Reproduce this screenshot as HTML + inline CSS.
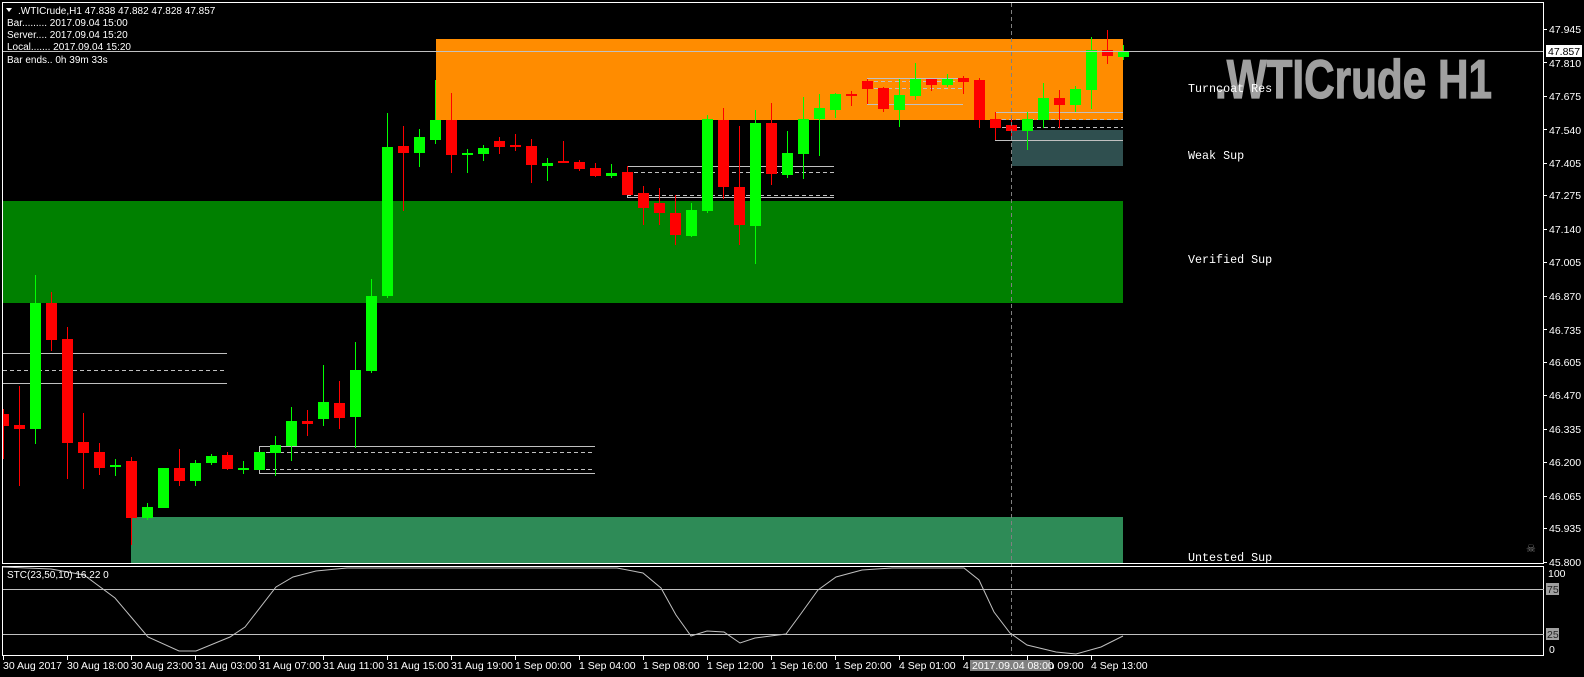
<!DOCTYPE html>
<html><head><meta charset="utf-8"><style>
html,body{margin:0;padding:0;background:#000;width:1584px;height:677px;overflow:hidden}
svg{display:block}
text{font-family:"Liberation Sans",sans-serif}
.ax{font-size:10.5px;fill:#fff}
.mono{font-family:"Liberation Mono",monospace;font-size:11.7px;fill:#fff}
.tl{font-size:10px;fill:#fff}
</style></head><body>
<svg id="s" width="1584" height="677" xmlns="http://www.w3.org/2000/svg">
<rect width="1584" height="677" fill="#000"/>
<rect x="436" y="39" width="687" height="81" fill="#ff8c00"/>
<rect x="3" y="201" width="1120" height="102" fill="#008000"/>
<rect x="131" y="517" width="992" height="47" fill="#2e8b57"/>
<rect x="1012" y="130" width="111" height="36" fill="#2f4f4f"/>
<g stroke="#c0c0c0" stroke-width="1" fill="none">
<line x1="3" y1="353.5" x2="227" y2="353.5"/>
<line x1="3" y1="370.5" x2="227" y2="370.5" stroke-dasharray="4,3"/>
<line x1="3" y1="383.5" x2="227" y2="383.5"/>
<line x1="259" y1="446.5" x2="595" y2="446.5"/>
<line x1="259" y1="452.5" x2="595" y2="452.5" stroke-dasharray="4,3"/>
<line x1="259" y1="469.5" x2="595" y2="469.5" stroke-dasharray="4,3"/>
<line x1="259" y1="473.5" x2="595" y2="473.5"/>
<line x1="259.5" y1="446" x2="259.5" y2="473"/>
<line x1="627" y1="166.5" x2="834" y2="166.5"/>
<line x1="627" y1="172.5" x2="834" y2="172.5" stroke-dasharray="4,3"/>
<line x1="627" y1="195.5" x2="834" y2="195.5" stroke-dasharray="4,3"/>
<line x1="627" y1="197.5" x2="834" y2="197.5"/>
<line x1="627.5" y1="166" x2="627.5" y2="197"/>
<line x1="867" y1="78.5" x2="963" y2="78.5"/>
<line x1="867" y1="81.5" x2="963" y2="81.5" stroke-dasharray="4,3"/>
<line x1="867" y1="88.5" x2="963" y2="88.5" stroke-dasharray="4,3"/>
<line x1="867" y1="104.5" x2="963" y2="104.5"/>
<line x1="995" y1="112.5" x2="1123" y2="112.5"/>
<line x1="995" y1="119.5" x2="1123" y2="119.5" stroke-dasharray="4,3"/>
<line x1="995" y1="127.5" x2="1123" y2="127.5" stroke-dasharray="4,3"/>
<line x1="995" y1="140.5" x2="1123" y2="140.5"/>
<line x1="995.5" y1="112" x2="995.5" y2="140"/>
</g>
<g id="candles"></g>
<line x1="3" y1="51.5" x2="1544" y2="51.5" stroke="#c0c0c0"/>
<line x1="1011.5" y1="3" x2="1011.5" y2="656" stroke="#808080" stroke-dasharray="4,3"/>
<text x="1215" y="98" font-size="55" font-weight="bold" fill="#a0a0a0" stroke="#a0a0a0" stroke-width="1.2" textLength="277" lengthAdjust="spacingAndGlyphs">.WTICrude H1</text>
<text class="mono" x="1188" y="92">Turncoat Res</text>
<text class="mono" x="1188" y="159">Weak Sup</text>
<text class="mono" x="1188" y="263">Verified Sup</text>
<text class="mono" x="1188" y="561">Untested Sup</text>
<path d="M6 8 L12 8 L9 12 Z" fill="#fff"/>
<text class="tl" x="18" y="14">.WTICrude,H1  47.838 47.882 47.828 47.857</text>
<text class="tl" x="7" y="26">Bar......... 2017.09.04 15:00</text>
<text class="tl" x="7" y="38">Server.... 2017.09.04 15:20</text>
<text class="tl" x="7" y="50">Local....... 2017.09.04 15:20</text>
<text class="tl" x="7" y="63">Bar ends.. 0h 39m 33s</text>
<rect x="2.5" y="2.5" width="1541" height="561" fill="none" stroke="#fff"/>
<rect x="2.5" y="566.5" width="1541" height="89" fill="none" stroke="#fff"/>
<line x1="3" y1="589.5" x2="1544" y2="589.5" stroke="#c0c0c0"/>
<line x1="3" y1="634.5" x2="1544" y2="634.5" stroke="#c0c0c0"/>
<polyline fill="none" stroke="#c0c0c0" stroke-width="1" points="3,567 51,569 84,575 115,598 148,637 179,651 196,651 230,637 245,627 276,587 293,577 316,571 347,568 617,568 643,573 661,588 676,615 691,636 707,631 724,632 740,643 755,638 786,634 800,615 818,590 836,577 862,570 892,568 964,568 979,580 994,612 1010,633 1027,645 1056,652 1076,654 1101,647 1123,636"/>
<text class="tl" x="7" y="578">STC(23,50,10) 16.22 0</text>
<g class="ax">
<text x="1549" y="33">47.945</text>
<text x="1549" y="67">47.810</text>
<text x="1549" y="100">47.675</text>
<text x="1549" y="134">47.540</text>
<text x="1549" y="167">47.405</text>
<text x="1549" y="199">47.275</text>
<text x="1549" y="233">47.140</text>
<text x="1549" y="266">47.005</text>
<text x="1549" y="300">46.870</text>
<text x="1549" y="334">46.735</text>
<text x="1549" y="366">46.605</text>
<text x="1549" y="399">46.470</text>
<text x="1549" y="433">46.335</text>
<text x="1549" y="466">46.200</text>
<text x="1549" y="500">46.065</text>
<text x="1549" y="532">45.935</text>
<text x="1549" y="566">45.800</text>
</g>
<g stroke="#fff">
<line x1="1544" y1="29.5" x2="1547" y2="29.5"/><line x1="1544" y1="62.5" x2="1547" y2="62.5"/>
<line x1="1544" y1="96.5" x2="1547" y2="96.5"/><line x1="1544" y1="129.5" x2="1547" y2="129.5"/>
<line x1="1544" y1="163.5" x2="1547" y2="163.5"/><line x1="1544" y1="195.5" x2="1547" y2="195.5"/>
<line x1="1544" y1="229.5" x2="1547" y2="229.5"/><line x1="1544" y1="262.5" x2="1547" y2="262.5"/>
<line x1="1544" y1="296.5" x2="1547" y2="296.5"/><line x1="1544" y1="329.5" x2="1547" y2="329.5"/>
<line x1="1544" y1="362.5" x2="1547" y2="362.5"/><line x1="1544" y1="395.5" x2="1547" y2="395.5"/>
<line x1="1544" y1="429.5" x2="1547" y2="429.5"/><line x1="1544" y1="462.5" x2="1547" y2="462.5"/>
<line x1="1544" y1="496.5" x2="1547" y2="496.5"/><line x1="1544" y1="528.5" x2="1547" y2="528.5"/>
<line x1="1544" y1="562.5" x2="1547" y2="562.5"/>
</g>
<rect x="1546" y="45" width="36" height="12" fill="#fff"/>
<text x="1548" y="55" font-size="10.5" fill="#000">47.857</text>
<text x="1526" y="552" font-size="11" fill="#808080">☠</text>
<text class="ax" x="1548" y="577">100</text>
<rect x="1546" y="583" width="13" height="12" fill="#a0a0a0"/>
<text class="ax" x="1547" y="593" style="fill:#222">75</text>
<rect x="1546" y="628" width="13" height="12" fill="#a0a0a0"/>
<text class="ax" x="1547" y="638" style="fill:#222">25</text>
<text class="ax" x="1549" y="653">0</text>
<g class="ax">
<text x="3" y="669">30 Aug 2017</text>
<text x="67" y="669">30 Aug 18:00</text>
<text x="131" y="669">30 Aug 23:00</text>
<text x="195" y="669">31 Aug 03:00</text>
<text x="259" y="669">31 Aug 07:00</text>
<text x="323" y="669">31 Aug 11:00</text>
<text x="387" y="669">31 Aug 15:00</text>
<text x="451" y="669">31 Aug 19:00</text>
<text x="515" y="669">1 Sep 00:00</text>
<text x="579" y="669">1 Sep 04:00</text>
<text x="643" y="669">1 Sep 08:00</text>
<text x="707" y="669">1 Sep 12:00</text>
<text x="771" y="669">1 Sep 16:00</text>
<text x="835" y="669">1 Sep 20:00</text>
<text x="899" y="669">4 Sep 01:00</text>
<text x="963" y="669">4 Sep 05:00</text>
<text x="1027" y="669">4 Sep 09:00</text>
<text x="1091" y="669">4 Sep 13:00</text>
</g>
<rect x="970" y="660" width="80" height="11" fill="#808080"/>
<text class="ax" x="972" y="669">2017.09.04 08:00</text>
<g stroke="#fff" id="tt"></g>
</svg>
<script>
var d=[[0,'r',414,426,409,459],[1,'r',425,429,386,486],[2,'g',303,429,275,444],[3,'r',303,340,292,351],[4,'r',339,443,327,479],[5,'r',442,453,413,489],[6,'r',452,468,443,475],[7,'g',465,467,459,476],[8,'r',461,518,457,545],[9,'g',507,518,503,520],[10,'g',468,508,468,508],[11,'r',468,481,449,486],[12,'g',463,481,460,486],[13,'g',456,463,454,465],[14,'r',455,469,452,470],[15,'g',468,470,461,474],[16,'g',452,470,452,470],[17,'g',445,453,436,476],[18,'g',421,446,407,461],[19,'r',421,424,410,436],[20,'g',402,419,365,426],[21,'r',403,418,381,429],[22,'g',370,417,342,448],[23,'g',296,371,279,373],[24,'g',147,296,113,298],[25,'r',146,153,126,211],[26,'g',137,153,129,167],[27,'g',120,140,80,144],[28,'r',120,155,93,173],[29,'g',153,155,149,173],[30,'g',148,154,145,161],[31,'r',141,147,137,154],[32,'r',145,146,134,151],[33,'r',146,165,139,183],[34,'g',163,166,158,181],[35,'r',161,162,141,163],[36,'r',162,169,160,171],[37,'r',168,176,163,177],[38,'g',173,176,164,178],[39,'r',172,195,166,195],[40,'r',193,208,186,225],[41,'r',203,213,188,225],[42,'r',213,235,195,245],[43,'g',210,236,203,237],[44,'g',119,211,115,213],[45,'r',120,187,108,199],[46,'r',187,225,126,245],[47,'g',123,226,110,264],[48,'r',123,174,103,185],[49,'g',153,175,131,178],[50,'g',119,154,97,179],[51,'g',108,119,94,156],[52,'g',94,110,93,118],[53,'r',94,95,91,106],[54,'r',81,89,79,104],[55,'r',88,109,87,112],[56,'g',95,110,79,127],[57,'g',79,96,63,100],[58,'r',79,85,79,91],[59,'g',79,85,74,87],[60,'r',78,82,76,94],[61,'r',80,120,78,128],[62,'r',119,128,112,140],[63,'r',125,131,117,138],[64,'g',119,131,112,150],[65,'g',98,120,83,128],[66,'r',98,105,90,128],[67,'g',89,105,86,112],[68,'g',50,90,37,109],[69,'r',50,56,30,64],[70,'g',51,57,45,60]];
var g=document.getElementById('candles'),h='';
d.forEach(function(c){var x=3+16*c[0],col=c[1]=='g'?'#00ff00':'#ff0000';
h+='<rect x="'+x+'" y="'+c[4]+'" width="1" height="'+(c[5]-c[4])+'" fill="'+col+'"/>';
var bx=Math.max(3,x-5),bw=x+6-bx;h+='<rect x="'+bx+'" y="'+c[2]+'" width="'+bw+'" height="'+Math.max(2,c[3]-c[2])+'" fill="'+col+'"/>';});
g.innerHTML=h;
var t='';for(var k=0;k<18;k++){var x=3+64*k+0.5;t+='<line x1="'+x+'" y1="656" x2="'+x+'" y2="660"/>';}
document.getElementById('tt').innerHTML=t;
</script>
</body></html>
